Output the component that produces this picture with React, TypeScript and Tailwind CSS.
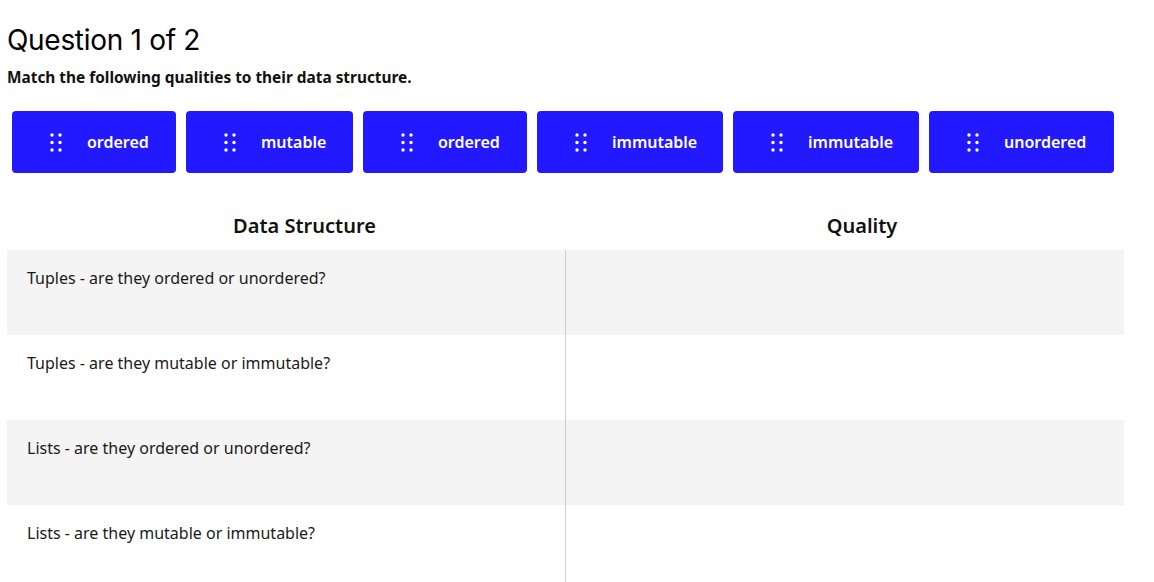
const chips = [
  { label: "ordered", w: "w-[164px]" },
  { label: "mutable", w: "w-[167px]" },
  { label: "ordered", w: "w-[164px]" },
  { label: "immutable", w: "w-[186px]" },
  { label: "immutable", w: "w-[186px]" },
  { label: "unordered", w: "w-[185px]" },
];

const rows = [
  "Tuples - are they ordered or unordered?",
  "Tuples - are they mutable or immutable?",
  "Lists - are they ordered or unordered?",
  "Lists - are they mutable or immutable?",
];

function Grip() {
  return (
    <svg width="12" height="19" viewBox="0 0 12 19" className="shrink-0">
      {[2, 9.5, 17].map((y) =>
        [2, 10].map((x) => <circle key={`${x}-${y}`} cx={x} cy={y} r="1.7" fill="white" />)
      )}
    </svg>
  );
}

export default function App() {
  return (
    <div className="min-h-[582px] bg-white pl-[7px] pt-[22px] text-[#111] font-['Noto_Sans','Open_Sans',sans-serif]">
      <h1 className="text-[28px] leading-[36px] font-normal tracking-[-0.3px] font-['Inter','Liberation_Sans',sans-serif] text-black">
        Question 1 of 2
      </h1>
      <p className="mt-[10px] text-[15.4px] leading-[20px] font-bold text-[#111]">
        Match the following qualities to their data structure.
      </p>

      <div className="mt-[23px] ml-[5px] flex gap-[10px]">
        {chips.map((c, i) => (
          <div
            key={i}
            className={`${c.w} h-[62px] rounded-[4px] bg-[#2319ff] flex items-center pl-[38px] gap-[25px] text-white text-[16px] font-semibold`}
          >
            <Grip />
            <span>{c.label}</span>
          </div>
        ))}
      </div>

      <div className="mt-[33px] w-[1117px]">
        <div className="flex h-[40px] items-center text-[20px] font-semibold text-[#111]">
          <div className="w-[559px] pl-[36px] text-center">Data Structure</div>
          <div className="flex-1 pl-[34px] text-center">Quality</div>
        </div>
        <div className="mt-[4px]">
          {rows.map((r, i) => (
            <div key={i} className={`flex h-[85px] ${i % 2 === 0 ? "bg-[#f4f4f4]" : "bg-white"}`}>
              <div className="w-[559px] border-r border-[#cccccc] pl-[20px] pt-[16px] text-[16px] leading-[24px] text-[#1a1a1a]">
                {r}
              </div>
              <div className="flex-1" />
            </div>
          ))}
        </div>
      </div>
    </div>
  );
}
